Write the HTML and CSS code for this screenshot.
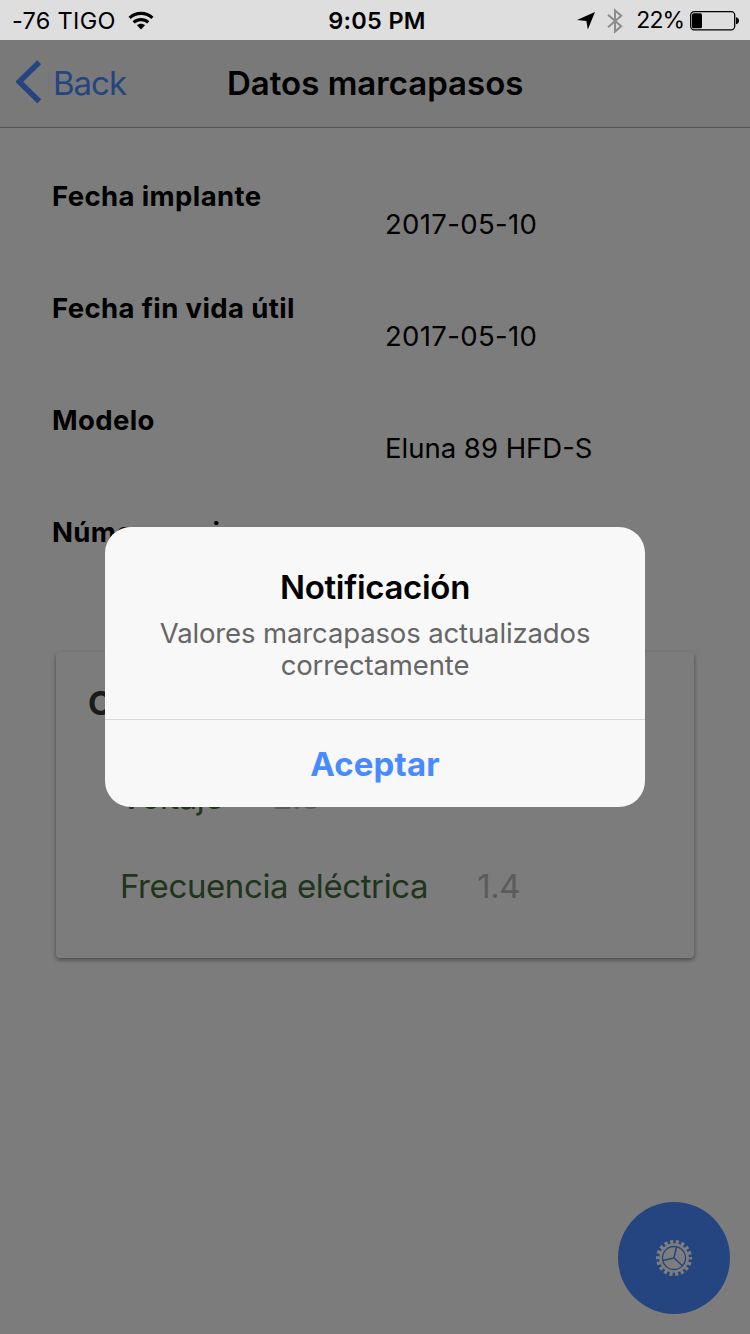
FILE: index.html
```html
<!DOCTYPE html>
<html lang="es">
<head>
<meta charset="utf-8">
<title>Datos marcapasos</title>
<link rel="stylesheet" href="styles.css">
</head>
<body>
<div class="status">
  <div class="status-left">
    <span class="carrier">-76 TIGO</span>
    <svg class="wifi" width="26" height="19" viewBox="0 0 26 19"><g fill="none" stroke="#000" stroke-width="3.2"><path d="M1.6 6.9C8 .9 18 .9 24.4 6.9"/><path d="M5.7 11.4c4.2-3.8 10.4-3.8 14.6 0"/></g><path d="M13 18.4l-4-4.1c2.200-2 5.800-2 8 0z"/></svg>
  </div>
  <span class="clock">9:05 PM</span>
  <div class="status-right">
    <svg class="arrow" width="18" height="18" viewBox="0 0 18 18"><path d="M18 0L10.800 17.600 9.400 9 0 8z"/></svg>
    <svg class="bluetooth" width="16" height="26" viewBox="0 0 16 26"><path d="M1 6.800L14.200 18.200 8 23.500V2.500L14.200 7.800 1 19.200" fill="none" stroke="#8c8c8c" stroke-width="2"/></svg>
    <span class="percent">22%</span>
    <svg class="battery" width="50" height="20" viewBox="0 0 50 20"><rect x=".7" y=".7" width="44" height="18.100" rx="3.500" fill="none" stroke="#000" stroke-width="1.300"/><rect x="2" y="2.200" width="10" height="15" rx="1.500"/><path d="M46 6.200c4 .4 4 6.600 0 7z"/></svg>
  </div>
</div>
<header class="nav">
  <svg class="chevron" width="26" height="44" viewBox="0 0 26 44"><path d="M23.200 2.200L3.200 21.700l20 19.500" fill="none" stroke="#24457f" stroke-width="5.600"/></svg>
  <span class="back">Back</span>
  <h1 class="title">Datos marcapasos</h1>
</header>
<main class="content">
  <dl class="data">
    <div class="row"><dt class="label">Fecha implante</dt><dd class="value">2017-05-10</dd></div>
    <div class="row"><dt class="label">Fecha fin vida útil</dt><dd class="value">2017-05-10</dd></div>
    <div class="row"><dt class="label">Modelo</dt><dd class="value model">Eluna 89 HFD-S</dd></div>
    <div class="row"><dt class="label">Número serie</dt></div>
  </dl>
  <section class="card">
    <h2 class="card-title">C</h2>
    <div class="item"><span class="name">Voltaje</span><span class="reading">2.8</span></div>
    <div class="item"><span class="name">Frecuencia eléctrica</span><span class="reading">1.4</span></div>
  </section>
</main>
<button class="fab" aria-label="Ajustes">
  <svg width="38" height="38" viewBox="-19 -19 38 38">
    <circle r="16.200" fill="none" stroke="#7d7d7d" stroke-width="3.800" stroke-dasharray="3.155 2.5" stroke-dashoffset="1.600"/>
    <circle r="14.800" fill="#7d7d7d"/>
    <circle r="11.500" fill="none" stroke="#24457f" stroke-width="1.300"/>
    <path d="M0 0L2.500-11.300M0 0L8.400 7.700M0 0L-11.200 2.500" fill="none" stroke="#24457f" stroke-width="1.500"/>
  </svg>
</button>
<div class="dialog">
  <div class="dialog-body">
    <h2 class="dialog-title">Notificación</h2>
    <p class="message">Valores marcapasos actualizados<br>correctamente</p>
  </div>
  <button class="accept">Aceptar</button>
</div>
</body>
</html>
```
FILE: styles.css
```css
* { box-sizing: border-box; margin: 0; padding: 0; }
body {
  position: relative;
  width: 750px;
  height: 1334px;
  overflow: hidden;
  display: flex;
  flex-direction: column;
  background: #7c7c7c;
  color: #000;
  font-family: Inter, "Liberation Sans", sans-serif;
}
svg { display: block; flex: none; }
span, h1, h2, dt { white-space: nowrap; }
button { border: 0; font: inherit; }

.status {
  height: 40px;
  display: grid;
  grid-template-columns: 1fr auto 1fr;
  align-items: center;
  padding: 1px 10px 0 12px;
  background: #dedede;
  font-size: 23.5px;
  line-height: 39px;
}
.status-left { display: flex; align-items: center; gap: 12px; }
.status-right { display: flex; align-items: center; justify-content: flex-end; }
.carrier { letter-spacing: 0.3px; }
.clock { padding-left: 2px; font-weight: 600; letter-spacing: 0.3px; }
.arrow { margin-right: 12px; }
.bluetooth { margin-right: 13px; }
.percent { margin-right: 6px; font-size: 23px; letter-spacing: -1px; }

.nav {
  height: 88px;
  display: grid;
  grid-template-columns: 26px 165px 306px;
  column-gap: 10px;
  align-items: center;
  padding: 0 0 1px 16px;
  border-bottom: 1px solid #535353;
  background: #797979;
  line-height: 44px;
}
.chevron { margin-top: -2px; }
.back { padding-left: 1px; color: #24457f; font-size: 33px; letter-spacing: -1px; }
.title { font-size: 33px; font-weight: 600; letter-spacing: 0; }

.content { flex: 1; padding: 40px 56px 0; }
.data { height: 484px; margin-left: -4px; }
.row {
  height: 112px;
  display: grid;
  grid-template-columns: 333px 1fr;
  font-size: 27.5px;
  line-height: 56px;
}
.label { font-weight: 700; letter-spacing: 0.38px; }
.value { padding-top: 28px; letter-spacing: 0.35px; }
.model { letter-spacing: 0; }
.card {
  height: 306px;
  padding: 29px 32px;
  border-radius: 4px;
  background: #7c7c7c;
  box-shadow: 0 2px 4px rgba(0, 0, 0, .4);
}
.card-title { height: 76px; font-size: 33px; line-height: 44px; color: #1a1a1a; }
.item {
  height: 89px;
  display: flex;
  gap: 49px;
  padding-left: 32px;
  font-size: 33px;
  line-height: 81px;
}
.name { color: #20351c; letter-spacing: -0.4px; }
.reading { color: #5b5b5b; letter-spacing: -0.4px; }

.fab {
  position: absolute;
  right: 20px;
  bottom: 20px;
  width: 112px;
  height: 112px;
  border-radius: 50%;
  background: #24457f;
  display: grid;
  place-items: center;
}

.dialog {
  position: absolute;
  left: 105px;
  top: 527px;
  width: 540px;
  height: 280px;
  border-radius: 26px;
  overflow: hidden;
  background: #f8f8f8;
  text-align: center;
}
.dialog-body { height: 192px; padding-top: 38px; }
.dialog-title { font-size: 33px; font-weight: 600; line-height: 44px; letter-spacing: -0.3px; }
.message { padding-top: 8px; font-size: 27.5px; line-height: 32px; letter-spacing: -0.13px; color: #666; }
.accept {
  display: block;
  width: 100%;
  height: 88px;
  border-top: 1px solid #d8d8db;
  background: none;
  color: #488aff;
  font-size: 33px;
  font-weight: 700;
  letter-spacing: 0.15px;
}
```
